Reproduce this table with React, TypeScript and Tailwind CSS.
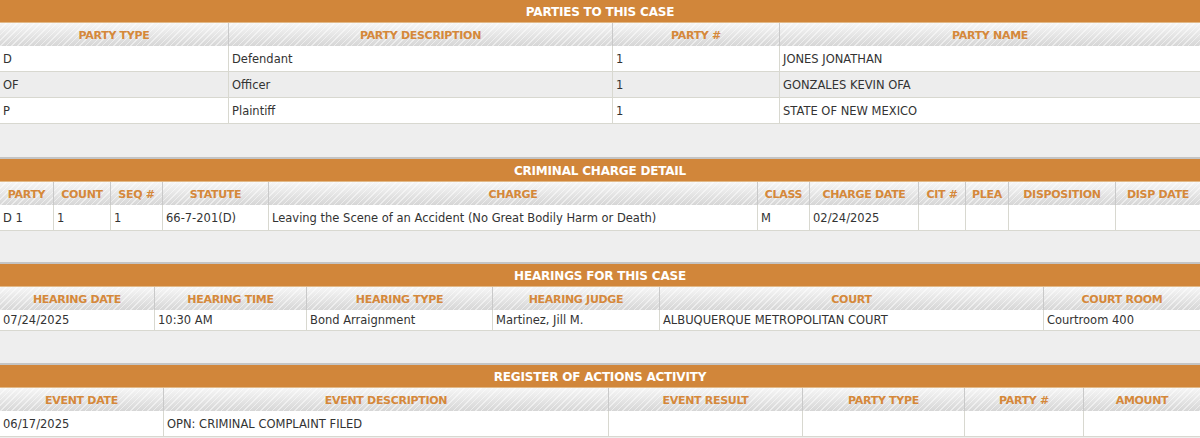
const font = "font-['DejaVu_Sans',Verdana,sans-serif]";

type Section = {
  title: string;
  cols: string;
  headers: string[];
  rows: string[][];
  rowH: string;
  top: string;
};

const sections: Section[] = [
  {
    title: "PARTIES TO THIS CASE",
    cols: "grid-cols-[228px_384px_167px_1fr]",
    headers: ["PARTY TYPE", "PARTY DESCRIPTION", "PARTY #", "PARTY NAME"],
    rows: [
      ["D", "Defendant", "1", "JONES JONATHAN"],
      ["OF", "Officer", "1", "GONZALES KEVIN OFA"],
      ["P", "Plaintiff", "1", "STATE OF NEW MEXICO"],
    ],
    rowH: "h-[26px]",
    top: "",
  },
  {
    title: "CRIMINAL CHARGE DETAIL",
    cols: "grid-cols-[53px_57px_52px_106px_489px_52px_109px_47px_43px_107px_1fr]",
    headers: ["PARTY", "COUNT", "SEQ #", "STATUTE", "CHARGE", "CLASS", "CHARGE DATE", "CIT #", "PLEA", "DISPOSITION", "DISP DATE"],
    rows: [
      ["D 1", "1", "1", "66-7-201(D)", "Leaving the Scene of an Accident (No Great Bodily Harm or Death)", "M", "02/24/2025", "", "", "", ""],
    ],
    rowH: "h-[26px]",
    top: "mt-[33px] border-t-2 border-[#c4c4c4]",
  },
  {
    title: "HEARINGS FOR THIS CASE",
    cols: "grid-cols-[154px_152px_186px_167px_384px_1fr]",
    headers: ["HEARING DATE", "HEARING TIME", "HEARING TYPE", "HEARING JUDGE", "COURT", "COURT ROOM"],
    rows: [["07/24/2025", "10:30 AM", "Bond Arraignment", "Martinez, Jill M.", "ALBUQUERQUE METROPOLITAN COURT", "Courtroom 400"]],
    rowH: "h-[21px]",
    top: "mt-[31px] border-t-2 border-[#c4c4c4]",
  },
  {
    title: "REGISTER OF ACTIONS ACTIVITY",
    cols: "grid-cols-[163px_445px_194px_162px_119px_1fr]",
    headers: ["EVENT DATE", "EVENT DESCRIPTION", "EVENT RESULT", "PARTY TYPE", "PARTY #", "AMOUNT"],
    rows: [["06/17/2025", "OPN: CRIMINAL COMPLAINT FILED", "", "", "", ""]],
    rowH: "h-[26px]",
    top: "mt-[32px] border-t-2 border-[#c4c4c4]",
  },
];

const headerBg =
  "bg-[image:repeating-linear-gradient(135deg,rgba(255,255,255,0.5)_0px,rgba(255,255,255,0.5)_1px,transparent_1px,transparent_4px),linear-gradient(to_bottom,#f6f6f6,#d6d6d6)]";

function CaseTable({ s }: { s: Section }) {
  return (
    <div className={s.top}>
      <div className="h-[23px] pt-[1px] bg-[#d1863a] border-b border-[#e2b988] flex items-center justify-center">
        <span className="text-white font-bold text-[12px] tracking-[-0.2px]">{s.title}</span>
      </div>
      <div className={`grid ${s.cols} h-[23px] ${headerBg}`}>
        {s.headers.map((h, i) => (
          <div
            key={i}
            className={`flex items-center justify-center pt-[4px] text-[11px] font-bold tracking-[-0.3px] text-[#d5883a] whitespace-nowrap ${i > 0 ? "border-l border-[#c9c9c9]" : ""}`}
          >
            {h}
          </div>
        ))}
      </div>
      {s.rows.map((r, ri) => (
        <div
          key={ri}
          className={`grid ${s.cols} ${s.rowH} border-b border-[#d8d8d0] ${ri % 2 === 1 ? "bg-[#ededed]" : "bg-white"}`}
        >
          {r.map((c, ci) => (
            <div
              key={ci}
              className={`flex items-center pl-[3px] pt-[2px] text-[11.5px] text-[#333] whitespace-nowrap ${ci > 0 ? "border-l border-[#d8d8d0]" : ""}`}
            >
              {c}
            </div>
          ))}
        </div>
      ))}
    </div>
  );
}

export default function App() {
  return (
    <div className={`min-h-screen bg-[#eeeeee] ${font}`}>
      {sections.map((s, i) => (
        <CaseTable key={i} s={s} />
      ))}
    </div>
  );
}
